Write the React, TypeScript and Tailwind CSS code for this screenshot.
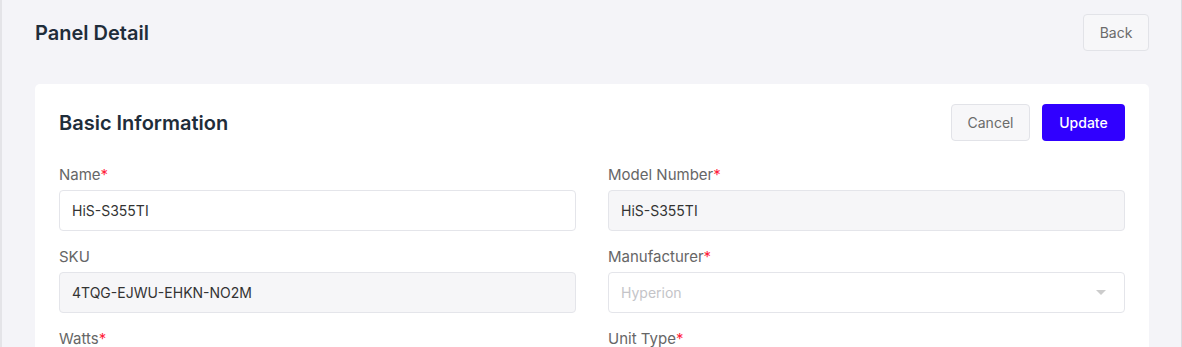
import React from 'react';

const font = { fontFamily: 'Inter, "Noto Sans", sans-serif' };

function Label({ text, required }: { text: string; required?: boolean }) {
  return (
    <label className="block h-[20px] leading-[20px] text-[15px] text-[#666666] mb-[5px]">
      {text}
      {required && <span className="text-[#ff1f3d]">*</span>}
    </label>
  );
}

function Field({ label, required, value, disabled }: { label: string; required?: boolean; value?: string; disabled?: boolean }) {
  return (
    <div className="mb-[16px]">
      <Label text={label} required={required} />
      <div
        className={`h-[41px] flex items-center px-[12px] border border-[#e4e5ea] rounded-[4px] text-[14px] text-[#333333] ${
          disabled ? 'bg-[#f6f6f8]' : 'bg-white'
        }`}
      >
        {value}
      </div>
    </div>
  );
}

function SelectField({ label, required, placeholder }: { label: string; required?: boolean; placeholder: string }) {
  return (
    <div className="mb-[16px]">
      <Label text={label} required={required} />
      <div className="h-[41px] flex items-center justify-between pl-[12px] pr-[18px] border border-[#e4e5ea] rounded-[4px] bg-white text-[14px] text-[#c4c4c8]">
        <span>{placeholder}</span>
        <svg width="10" height="5" viewBox="0 0 10 5">
          <path d="M0 0 L10 0 L5 5 Z" fill="#cccccc" />
        </svg>
      </div>
    </div>
  );
}

export default function App() {
  return (
    <div style={font} className="w-[1182px] h-[347px] overflow-hidden flex bg-[#f4f4f8]">
      <div className="w-[2px] bg-[#e4e4e8] flex-shrink-0" />
      <div className="flex-1 pl-[33px] pr-[32px] pt-[14px] border-r border-[#dcdce0]">
        <div className="flex items-center justify-between h-[37px]">
          <h1 className="text-[20px] font-semibold text-[#1f2d3a]">Panel Detail</h1>
          <button className="h-[37px] w-[66px] rounded-[4px] border border-[#e2e3e8] bg-[#f7f7f9] text-[14px] text-[#6b6b6b]">
            Back
          </button>
        </div>

        <div className="mt-[33px] bg-white rounded-[5px] px-[24px] pt-[20px]">
          <div className="flex items-center justify-between h-[37px] mb-[24px]">
            <h2 className="text-[20px] font-semibold text-[#1f2d3a]">Basic Information</h2>
            <div className="flex gap-[12px]">
              <button className="h-[37px] w-[79px] rounded-[4px] border border-[#e2e3e8] bg-[#f7f7f9] text-[14px] text-[#6b6b6b]">
                Cancel
              </button>
              <button className="h-[37px] w-[83px] rounded-[4px] bg-[#3000ff] text-[14px] font-medium text-white">
                Update
              </button>
            </div>
          </div>

          <div className="grid grid-cols-2 gap-x-[32px]">
            <div>
              <Field label="Name" required value="HiS-S355TI" />
              <Field label="SKU" value="4TQG-EJWU-EHKN-NO2M" disabled />
              <Field label="Watts" required value="" />
            </div>
            <div>
              <Field label="Model Number" required value="HiS-S355TI" disabled />
              <SelectField label="Manufacturer" required placeholder="Hyperion" />
              <Field label="Unit Type" required value="" />
            </div>
          </div>
        </div>
      </div>
    </div>
  );
}
